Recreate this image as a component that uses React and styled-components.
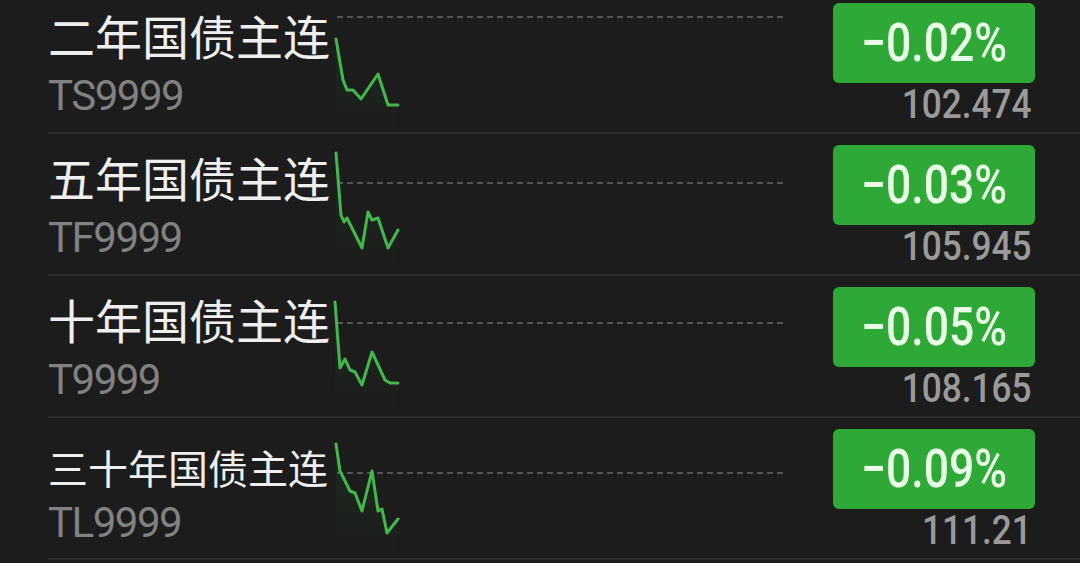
import React from 'react'
import styled, { createGlobalStyle } from 'styled-components'

const GlobalStyle = createGlobalStyle`
  html, body {
    margin: 0;
    padding: 0;
    background: #1c1c1c;
    overflow: hidden;
  }
`

const Screen = styled.div`
  width: 1080px;
  height: 563px;
  background: #1c1c1c;
  overflow: hidden;
`

// the list is scrolled a little, so the first row is cut at the top
const List = styled.div`
  margin-top: -8px;
`

const Row = styled.div`
  display: grid;
  grid-template-columns: 287px 450px 1fr;
  height: 140px;
  margin-left: 48px;
  padding-right: 45px;
  border-bottom: 2px solid #2c2c2c;
`

const Info = styled.div`
  display: flex;
  flex-direction: column;
  min-width: 0;
`

const Name = styled.div`
  margin-top: ${props => (props.$compact ? '29px' : '19px')};
  font-family: 'Noto Sans CJK SC', 'Noto Sans', sans-serif;
  font-size: ${props => (props.$compact ? '40px' : '47px')};
  line-height: 1;
  color: #eeeeee;
  white-space: nowrap;
`

const Code = styled.div`
  margin-top: ${props => (props.$compact ? '15px' : '17px')};
  font-family: Roboto, 'Liberation Sans', sans-serif;
  font-size: 42px;
  line-height: 1;
  letter-spacing: -1.5px;
  color: #818181;
`

const Chart = styled.svg`
  display: block;
  width: 450px;
  height: 140px;
  overflow: visible;
`

const Quote = styled.div`
  display: flex;
  flex-direction: column;
  align-items: flex-end;
`

const Badge = styled.div`
  margin-top: 11px;
  width: 202px;
  height: 80px;
  border-radius: 6px;
  background: #2ea836;
  display: flex;
  align-items: center;
  justify-content: center;
`

const Change = styled.span`
  display: inline-block;
  font-family: Roboto, 'Liberation Sans', sans-serif;
  font-weight: 500;
  font-size: 53px;
  line-height: 1;
  color: #eaffe8;
  transform: scaleX(0.84);
`

const Price = styled.span`
  display: inline-block;
  margin-top: 2px;
  margin-right: 3px;
  font-family: Roboto, 'Liberation Sans', sans-serif;
  font-weight: 500;
  font-size: 40px;
  line-height: 1;
  color: #9a9a9a;
  transform: scaleX(0.88);
  transform-origin: right center;
`

const rows = [
  {
    name: '二年国债主连',
    code: 'TS9999',
    change: '−0.02%',
    price: '102.474',
    base: 25,
    points: [[1, 47], [8, 88], [12, 98], [18, 98], [26, 107], [43, 82], [53, 113], [63, 113]],
  },
  {
    name: '五年国债主连',
    code: 'TF9999',
    change: '−0.03%',
    price: '105.945',
    base: 49,
    points: [[1, 19], [6, 81], [9, 88], [12, 84], [27, 114], [33, 78], [37, 86], [43, 84], [53, 114], [63, 96]],
  },
  {
    name: '十年国债主连',
    code: 'T9999',
    change: '−0.05%',
    price: '108.165',
    base: 47,
    points: [[0, 26], [5, 92], [10, 83], [15, 94], [20, 96], [27, 109], [37, 76], [50, 104], [55, 107], [63, 107]],
  },
  {
    name: '三十年国债主连',
    code: 'TL9999',
    change: '−0.09%',
    price: '111.21',
    base: 55,
    compact: true,
    points: [[1, 26], [5, 53], [15, 73], [20, 75], [27, 93], [37, 53], [43, 93], [47, 91], [52, 115], [63, 101]],
  },
]

const Sparkline = ({ base, points, id }) => {
  const line = points.map(([x, y]) => `${x},${y}`).join(' ')
  const last = points[points.length - 1]
  const area = `M${points[0][0]},140 L${line.replace(/ /g, ' L')} L${last[0]},140 Z`
  return (
    <Chart viewBox="0 0 450 140">
      <defs>
        <linearGradient id={id} x1="0" y1="0" x2="0" y2="1">
          <stop offset="0" stopColor="#2ea836" stopOpacity="0.1" />
          <stop offset="1" stopColor="#2ea836" stopOpacity="0" />
        </linearGradient>
      </defs>
      <line
        x1="2"
        y1={base}
        x2="450"
        y2={base}
        stroke="#6a6a6a"
        strokeWidth="1.5"
        strokeDasharray="6 4"
      />
      <path d={area} fill={`url(#${id})`} />
      <polyline
        points={line}
        fill="none"
        stroke="#42b84c"
        strokeWidth="3"
        strokeLinejoin="round"
        strokeLinecap="round"
      />
    </Chart>
  )
}

export default function App() {
  return (
    <Screen>
      <GlobalStyle />
      <List>
        {rows.map((row, i) => (
          <Row key={row.code}>
            <Info>
              <Name $compact={row.compact}>{row.name}</Name>
              <Code $compact={row.compact}>{row.code}</Code>
            </Info>
            <Sparkline base={row.base} points={row.points} id={`fill-${i}`} />
            <Quote>
              <Badge>
                <Change>{row.change}</Change>
              </Badge>
              <Price>{row.price}</Price>
            </Quote>
          </Row>
        ))}
      </List>
    </Screen>
  )
}
